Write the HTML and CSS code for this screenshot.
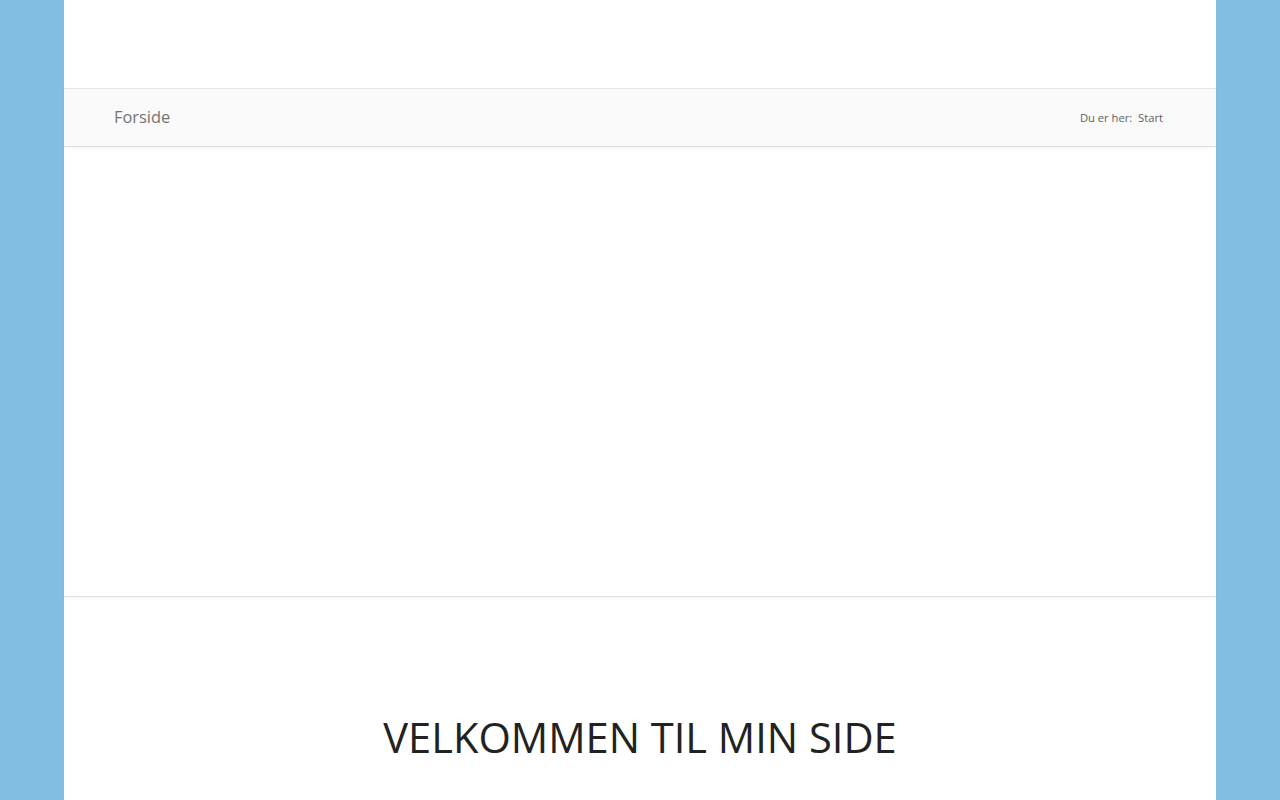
FILE: index.html
```html
<!DOCTYPE html>
<html lang="da">
<head>
  <meta charset="UTF-8" />
  <meta name="viewport" content="width=device-width, initial-scale=1" />
  <title>Forside</title>
  <link rel="stylesheet" href="styles.css">
</head>
<body>
  <div class="wrapper">
    <header class="top"></header>

    <div class="page-title">
      <h1>Forside</h1>
      <div class="breadcrumb">
        <span>Du er her:</span>
        <a href="#">Start</a>
      </div>
    </div>

    <section class="slider"></section>

    <main class="content">
      <h2>Velkommen til min side</h2>
    </main>
  </div>
</body>
</html>
```

FILE: styles.css
```css
body {
  margin: 0;
  background-color: #81bee2;
  font-family: 'Open Sans', sans-serif;
  color: #333;
}

.wrapper {
  width: 1152px;
  margin: 0 auto;
  background: white;
  min-height: 800px;
}

.top {
  height: 88px;
}

.page-title {
  display: flex;
  justify-content: space-between;
  align-items: center;
  height: 57px;
  padding: 0 53px 0 50px;
  background: #fafafa;
  border-top: 1px solid #e4e4e4;
  border-bottom: 1px solid #e0e0e0;
  box-shadow: 0 1px 2px rgba(0,0,0,0.05);
}

.page-title h1 {
  margin: 0 0 2px;
  font-size: 16.4px;
  font-weight: normal;
  color: #747474;
}

.breadcrumb {
  font-size: 11.2px;
  color: #5f5f5f;
}

.breadcrumb span {
  margin-right: 3px;
}

.breadcrumb a {
  color: #5f5f5f;
  text-decoration: none;
}

.slider {
  height: 449px;
  border-bottom: 1px solid #e0e0e0;
  box-shadow: 0 2px 3px rgba(0,0,0,0.04);
}

.content {
  padding-top: 116px;
  text-align: center;
}

.content h2 {
  margin: 0;
  font-size: 41.6px;
  font-weight: normal;
  text-transform: uppercase;
  color: #222;
  line-height: 1.2;
}
```
